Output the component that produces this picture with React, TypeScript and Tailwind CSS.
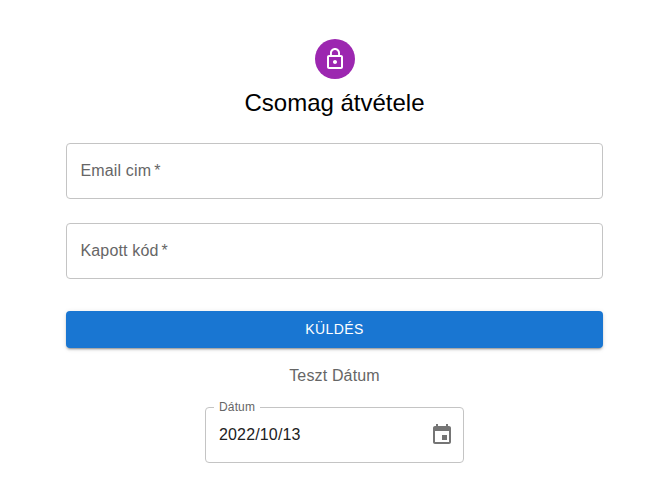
import React from 'react';

function Field({ label }: { label: string }) {
  return (
    <div className="flex h-14 w-full items-center rounded border border-[#c4c4c4] px-[13.5px] text-base tracking-[0.15px] text-[#666666]">
      {label}
      <span className="ml-[3px]">*</span>
    </div>
  );
}

export default function App() {
  return (
    <main className="flex h-[499px] w-[645px] flex-col items-center overflow-hidden bg-white pt-[39px] pr-[42px] pl-[66px] font-['Liberation_Sans',Arial,sans-serif]">
      <div className="flex size-10 items-center justify-center rounded-full bg-[#9c27b0]">
        <svg viewBox="0 0 24 24" className="size-6 fill-white">
          <path d="M12 17c1.1 0 2-.9 2-2s-.9-2-2-2-2 .9-2 2 .9 2 2 2zm6-9h-1V6c0-2.76-2.24-5-5-5S7 3.24 7 6v2H6c-1.1 0-2 .9-2 2v10c0 1.1.9 2 2 2h12c1.1 0 2-.9 2-2V10c0-1.1-.9-2-2-2zM8.9 6c0-1.71 1.39-3.1 3.1-3.1s3.1 1.39 3.1 3.1v2H8.9V6zM18 20H6V10h12v10z" />
        </svg>
      </div>
      <h1 className="mt-2 text-2xl leading-8 text-black">Csomag átvétele</h1>
      <div className="mt-6 flex w-full flex-col gap-6">
        <Field label="Email cim" />
        <Field label="Kapott kód" />
      </div>
      <button className="mt-8 h-[37px] w-full rounded bg-[#1976d2] pb-0.5 text-sm font-medium tracking-[0.4px] text-white shadow-[0_3px_1px_-2px_rgba(0,0,0,0.2),0_2px_2px_rgba(0,0,0,0.14),0_1px_5px_rgba(0,0,0,0.12)]">
        KÜLDÉS
      </button>
      <p className="mt-4 text-base tracking-[0.15px] text-[#666666]">Teszt Dátum</p>
      <div className="relative mt-[19px] flex h-14 w-[259px] items-center justify-between rounded border border-[#c4c4c4] pr-[9px] pl-[13px]">
        <span className="absolute -top-[9px] left-2 bg-white px-[5px] text-xs leading-4 tracking-[0.15px] text-[#666666]">Dátum</span>
        <span className="text-base tracking-[0.15px] text-[#212121]">2022/10/13</span>
        <svg viewBox="0 0 24 24" className="size-6 fill-[#757575]">
          <path d="M17 12h-5v5h5v-5zM16 1v2H8V1H6v2H5c-1.11 0-1.99.9-1.99 2L3 19c0 1.1.89 2 2 2h14c1.1 0 2-.9 2-2V5c0-1.1-.9-2-2-2h-1V1h-2zm3 18H5V8h14v11z" />
        </svg>
      </div>
    </main>
  );
}
